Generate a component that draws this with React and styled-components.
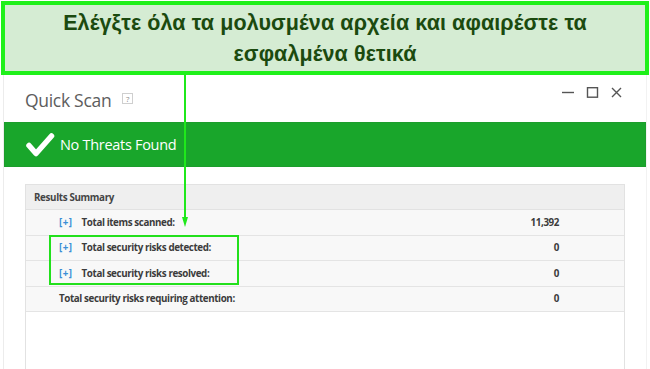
import React from "react";
import styled, { createGlobalStyle } from "styled-components";

const GlobalStyle = createGlobalStyle`
  *, *::before, *::after { box-sizing: border-box; }
  html, body { margin: 0; padding: 0; background: #fff; }
  body {
    width: 650px;
    height: 369px;
    overflow: hidden;
    font-family: "Open Sans", "Noto Sans", sans-serif;
  }
`;

const rows = [
  { label: "Total items scanned:", value: "11,392", expandable: true },
  { label: "Total security risks detected:", value: "0", expandable: true },
  { label: "Total security risks resolved:", value: "0", expandable: true },
  { label: "Total security risks requiring attention:", value: "0", expandable: false },
];

function CheckIcon() {
  return (
    <svg width="30" height="26" viewBox="0 0 30 26">
      <polyline
        points="4,13.5 11,21.5 26.5,4"
        fill="none"
        stroke="#fff"
        strokeWidth="5.5"
        strokeLinecap="round"
        strokeLinejoin="round"
      />
    </svg>
  );
}

function App() {
  return (
    <Page>
      <GlobalStyle />
      <Callout>
        Ελέγξτε όλα τα μολυσμένα αρχεία και αφαιρέστε τα
        <br />
        εσφαλμένα θετικά
      </Callout>

      <Window>
        <TitleBar>
          <Title>Quick Scan</Title>
          <Help>?</Help>
          <Controls>
            <svg width="60" height="12" viewBox="0 0 60 12">
              <line x1="0" y1="5.5" x2="12" y2="5.5" stroke="#555" strokeWidth="1.4" />
              <rect x="25.5" y="0.7" width="10" height="9.5" fill="none" stroke="#555" strokeWidth="1.4" />
              <path d="M50 1 L59 10 M59 1 L50 10" stroke="#555" strokeWidth="1.4" />
            </svg>
          </Controls>
        </TitleBar>

        <Banner>
          <CheckIcon />
          <BannerText>No Threats Found</BannerText>
        </Banner>

        <Summary>
          <SummaryHead>Results Summary</SummaryHead>
          {rows.map((r) => (
            <Row key={r.label}>
              <Label>
                {r.expandable && <Plus>[+]</Plus>}
                {r.label}
              </Label>
              <Value>{r.value}</Value>
            </Row>
          ))}
        </Summary>
      </Window>

      <ArrowLine />
      <ArrowHead />
      <Highlight />
    </Page>
  );
}

const Page = styled.div`
  position: relative;
  width: 650px;
  height: 369px;
  display: flex;
  flex-direction: column;
  overflow: hidden;
`;

const Callout = styled.div`
  margin: 1px 0 0 1px;
  width: 648px;
  height: 74px;
  flex: none;
  border: 4px solid #1ff01a;
  background: #d5ecd3;
  color: #1b4a0f;
  font-family: "Liberation Sans", Arial, sans-serif;
  font-weight: bold;
  font-size: 21.5px;
  line-height: 31px;
  letter-spacing: 0.1px;
  text-align: center;
  padding-top: 3px;
`;

const Window = styled.div`
  margin-left: 3px;
  width: 644px;
  flex: 1;
  display: flex;
  flex-direction: column;
  border-left: 1px solid #ececec;
  border-right: 1px solid #f2f2f2;
`;

const TitleBar = styled.div`
  height: 47px;
  display: flex;
  align-items: center;
  padding: 0 0 0 21px;
`;

const Title = styled.span`
  font-size: 17.5px;
  color: #5d5d5d;
  letter-spacing: -0.3px;
  margin-top: 2px;
`;

const Help = styled.span`
  margin-left: 11px;
  margin-top: -1px;
  width: 11px;
  height: 11px;
  border: 1px solid #cfcfcf;
  color: #888;
  font-size: 8px;
  line-height: 9px;
  text-align: center;
`;

const Controls = styled.div`
  margin-left: auto;
  margin-right: 24px;
  margin-top: -12px;
  display: flex;
`;

const Banner = styled.div`
  height: 45px;
  background: #19a62b;
  border: 1px solid #1c9d2c;
  display: flex;
  align-items: center;
  gap: 5px;
  padding-left: 20px;
`;

const BannerText = styled.span`
  color: #fff;
  font-size: 14.5px;
  letter-spacing: -0.3px;
`;

const Summary = styled.div`
  margin: 17px 21px 0 21px;
  flex: 1;
  border: 1px solid #e2e2e2;
  border-bottom: none;
  display: flex;
  flex-direction: column;
`;

const SummaryHead = styled.div`
  height: 25px;
  background: #efefef;
  border-bottom: 1px solid #e2e2e2;
  display: flex;
  align-items: center;
  padding-left: 8px;
  font-size: 9.8px;
  font-weight: 700;
  color: #444;
  letter-spacing: -0.35px;
`;

const Row = styled.div`
  height: 25.5px;
  background: #f8f8f8;
  border-bottom: 1.5px solid #e4e4e4;
  display: flex;
  align-items: center;
  justify-content: space-between;
  padding: 0 65px 0 33px;
  font-size: 9.8px;
  font-weight: 700;
  color: #3c3c3c;
  letter-spacing: -0.4px;
`;

const Label = styled.span`
  display: flex;
  align-items: center;
`;

const Plus = styled.span`
  color: #3a8fd6;
  margin-right: 9px;
  letter-spacing: 0.5px;
`;

const Value = styled.span`
  text-align: right;
`;

const ArrowLine = styled.div`
  position: absolute;
  left: 184px;
  top: 75px;
  width: 2px;
  height: 144px;
  background: #1fe81b;
`;

const ArrowHead = styled.div`
  position: absolute;
  left: 181.5px;
  top: 217px;
  width: 0;
  height: 0;
  border-left: 3.5px solid transparent;
  border-right: 3.5px solid transparent;
  border-top: 10px solid #1fe81b;
`;

const Highlight = styled.div`
  position: absolute;
  left: 49px;
  top: 235px;
  width: 190px;
  height: 50px;
  border: 2px solid #22e01c;
`;

export default App;
